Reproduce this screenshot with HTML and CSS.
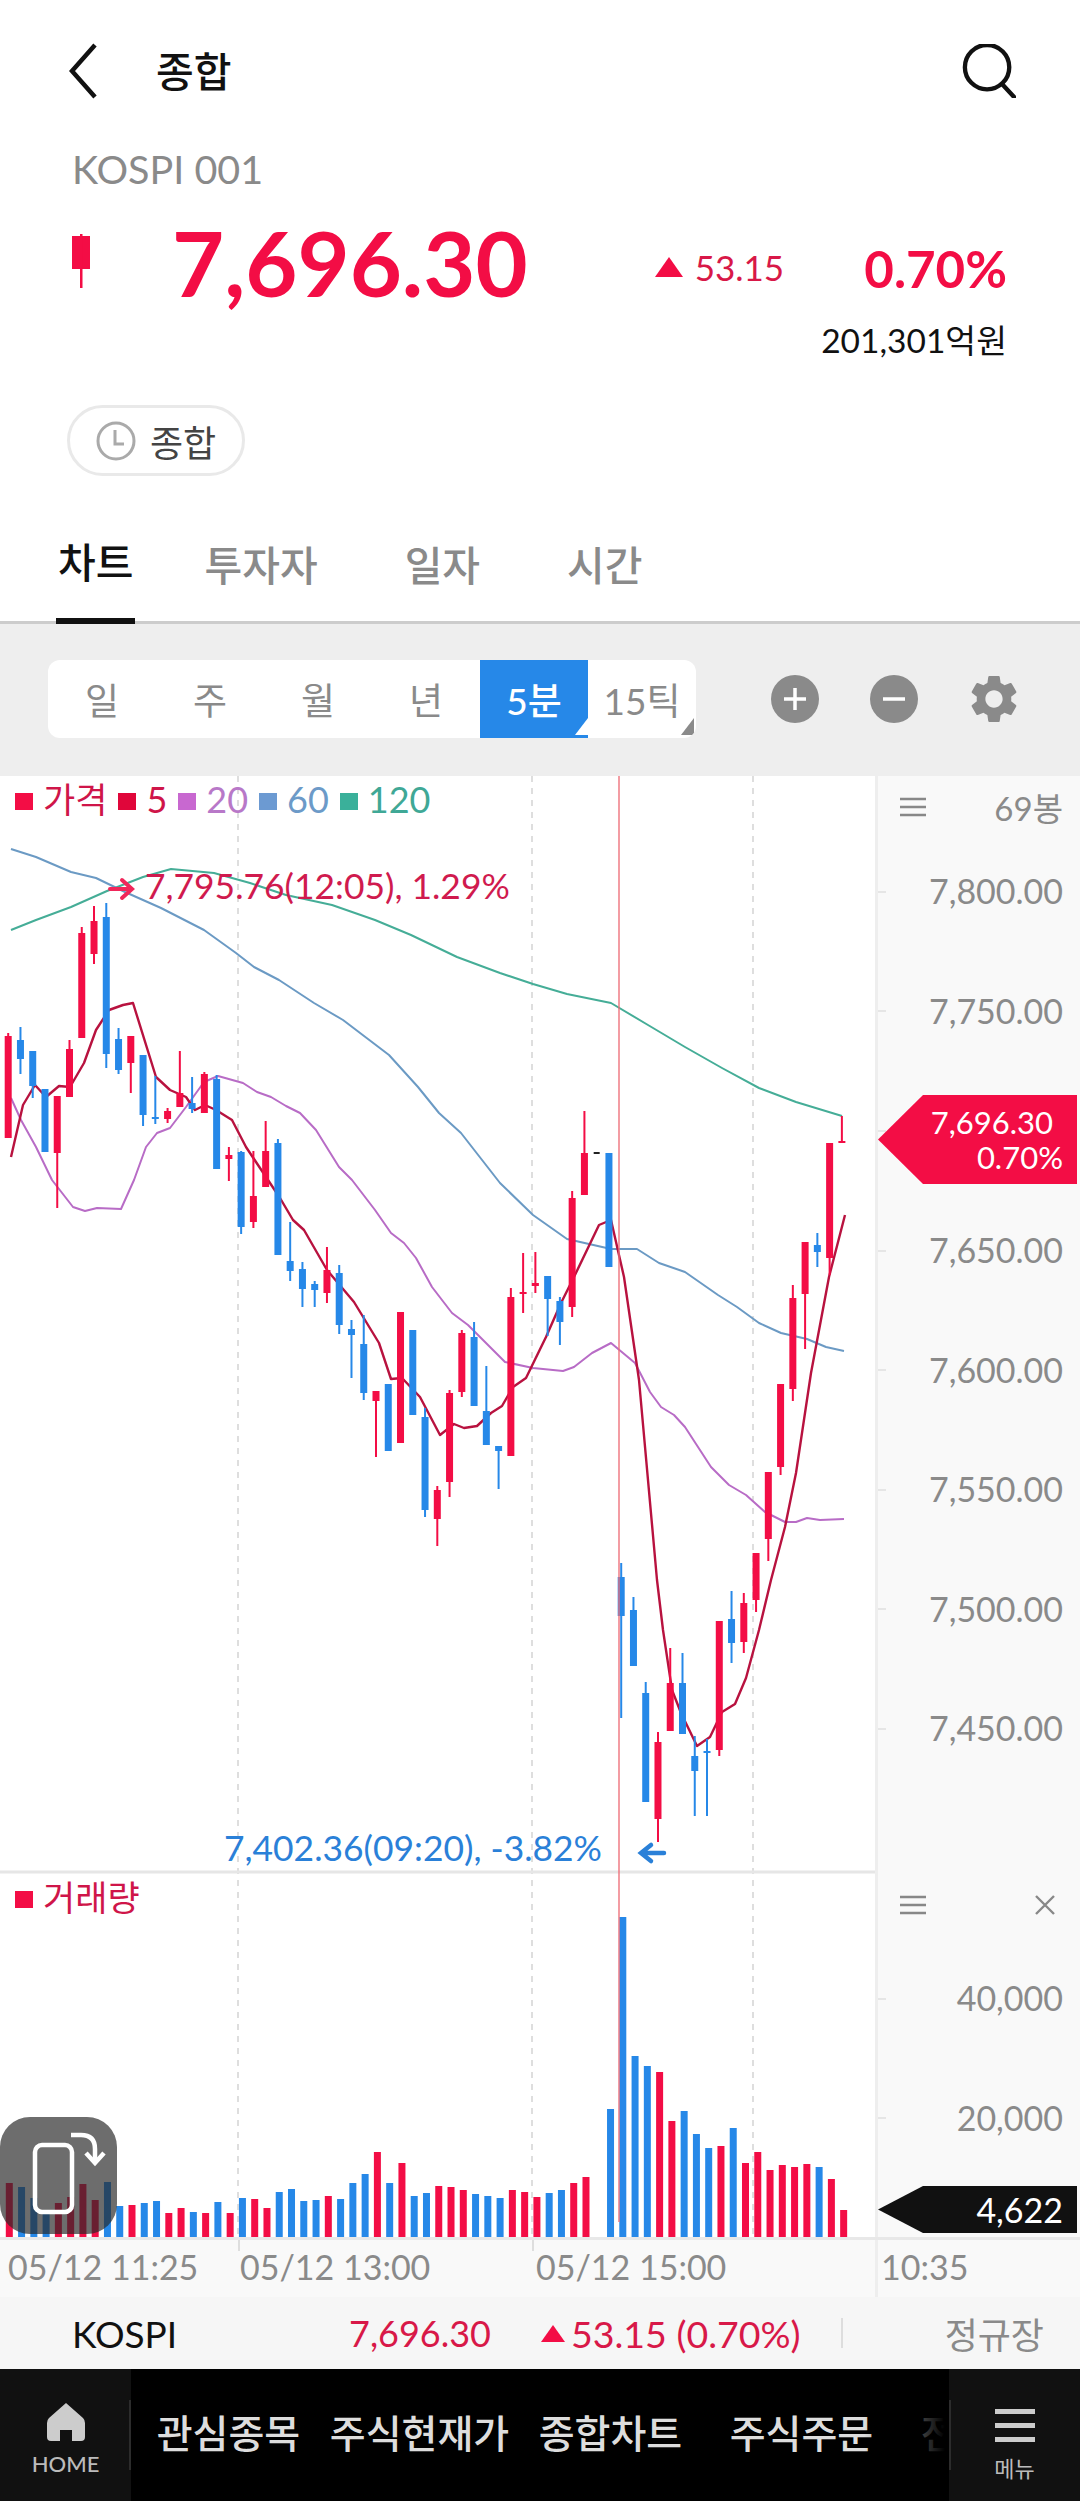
FILE: index.html
```html
<!DOCTYPE html>
<html lang="ko">
<head>
  <meta charset="UTF-8">
  <title>종합 KOSPI 차트</title>
  <link rel="stylesheet" href="styles.css">
</head>
<body>

  <header class="topbar">
    <svg class="icon-back" viewBox="0 0 30 56"><path d="M26 2 L3 28 L26 54"/></svg>
    <h1 class="title">종합</h1>
    <svg class="icon-search" viewBox="0 0 56 56"><circle cx="26" cy="24" r="23"/><path d="M42 42 L54 55"/></svg>
  </header>

  <section class="quote">
    <div class="code">KOSPI 001</div>
    <div class="quote-row">
      <svg class="mini-candle" viewBox="0 0 18 54"><rect x="0" y="2" width="18" height="33"/><rect x="8" y="0" width="2.5" height="54"/></svg>
      <div class="price">7,696.30</div>
      <div class="delta"><i class="tri-up"></i>53.15</div>
      <div class="pct">0.70%</div>
    </div>
    <div class="amount">201,301억원</div>
    <div class="pill">
      <svg class="icon-clock" viewBox="0 0 40 40"><circle cx="20" cy="20" r="18"/><path d="M19 9 V23 H28"/></svg>
      <span>종합</span>
    </div>
  </section>

  <nav class="tabs">
    <a class="tab tab-active">차트</a>
    <a class="tab">투자자</a>
    <a class="tab">일자</a>
    <a class="tab">시간</a>
  </nav>

  <div class="toolbar">
    <div class="periods">
      <span class="period">일</span>
      <span class="period">주</span>
      <span class="period">월</span>
      <span class="period">년</span>
      <span class="period period-on corner">5분</span>
      <span class="period corner">15틱</span>
    </div>
    <svg class="tool tool-plus" viewBox="0 0 48 48"><circle cx="24" cy="24" r="24"/><path d="M24 13 V35 M13 24 H35"/></svg>
    <svg class="tool tool-minus" viewBox="0 0 48 48"><circle cx="24" cy="24" r="24"/><path d="M13 24 H35"/></svg>
    <svg class="tool tool-gear" viewBox="2.4 2 19.2 20"><path d="M19.14 12.94c.04-.3.06-.61.06-.94 0-.32-.02-.64-.07-.94l2.03-1.58a.49.49 0 0 0 .12-.61l-1.92-3.32a.488.488 0 0 0-.59-.22l-2.39.96c-.5-.38-1.03-.7-1.62-.94l-.36-2.54a.484.484 0 0 0-.48-.41h-3.84c-.24 0-.43.17-.47.41l-.36 2.54c-.59.24-1.13.57-1.62.94l-2.39-.96c-.22-.08-.47 0-.59.22L2.74 8.87c-.12.21-.08.47.12.61l2.03 1.58c-.05.3-.09.63-.09.94s.02.64.07.94l-2.03 1.58a.49.49 0 0 0-.12.61l1.92 3.32c.12.22.37.29.59.22l2.39-.96c.5.38 1.03.7 1.62.94l.36 2.54c.05.24.24.41.48.41h3.84c.24 0 .44-.17.47-.41l.36-2.54c.59-.24 1.13-.56 1.62-.94l2.39.96c.22.08.47 0 .59-.22l1.92-3.32c.12-.22.07-.47-.12-.61l-2.01-1.58zM12 15.6c-1.98 0-3.6-1.62-3.6-3.6s1.62-3.6 3.6-3.6 3.6 1.62 3.6 3.6-1.62 3.6-3.6 3.6z"/></svg>
  </div>

  <section class="chart">
    <div class="chart-body">
      <div class="plot">
        <svg id="plot-svg" class="plot-svg" viewBox="0 776 875 1461"></svg>

        <div class="legend legend-price">
          <i class="sq sq-price"></i><span class="c-price legend-ko">가격</span>
          <i class="sq sq-5"></i><span class="c-price">5</span>
          <i class="sq sq-20"></i><span class="c-20">20</span>
          <i class="sq sq-60"></i><span class="c-60">60</span>
          <i class="sq sq-120"></i><span class="c-120">120</span>
        </div>
        <div class="legend legend-volume">
          <i class="sq sq-price"></i><span class="c-price legend-ko">거래량</span>
        </div>

        <div class="note note-high">7,795.76(12:05), 1.29%</div>
        <div class="note note-low">7,402.36(09:20), -3.82%</div>

        <div class="rotate-btn">
          <svg viewBox="0 0 117 117"><rect x="35" y="28" width="37" height="67" rx="7"/><path d="M71 18 H81 Q95 18 95 32 V46"/><path d="M86 36 L95 46 L104 36"/></svg>
        </div>
      </div>

      <aside class="rail">
        <div class="rail-head">
          <svg class="icon-lines" viewBox="0 0 26 20"><path d="M0 2 H26 M0 10 H26 M0 18 H26"/></svg>
          <span>69봉</span>
        </div>
        <div class="axis-row">7,800.00</div>
        <div class="axis-row">7,750.00</div>
        <div class="axis-row"></div>
        <div class="axis-row">7,650.00</div>
        <div class="axis-row">7,600.00</div>
        <div class="axis-row">7,550.00</div>
        <div class="axis-row">7,500.00</div>
        <div class="axis-row">7,450.00</div>
        <div class="rail-gap"></div>
        <div class="rail-head rail-head-vol">
          <svg class="icon-lines" viewBox="0 0 26 20"><path d="M0 2 H26 M0 10 H26 M0 18 H26"/></svg>
          <svg class="icon-close" viewBox="0 0 20 20"><path d="M1 1 L19 19 M19 1 L1 19"/></svg>
        </div>
        <div class="axis-row">40,000</div>
        <div class="axis-row">20,000</div>

        <div class="tag tag-price"><span>7,696.30</span><span>0.70%</span></div>
        <div class="tag tag-volume"><span>4,622</span></div>
      </aside>
    </div>

    <div class="time-axis">
      <div class="time-cell time-a">05/12 11:25</div>
      <div class="time-cell time-b">05/12 13:00</div>
      <div class="time-cell time-c">05/12 15:00</div>
      <div class="time-cell time-d">10:35</div>
    </div>
  </section>

  <div class="strip">
    <span class="strip-name">KOSPI</span>
    <span class="strip-price">7,696.30</span>
    <span class="strip-delta"><i class="tri-up tri-small"></i>53.15 (0.70%)</span>
    <i class="strip-div"></i>
    <span class="strip-state">정규장</span>
  </div>

  <nav class="bottom-nav">
    <div class="nav-side nav-home">
      <svg class="icon-home" viewBox="0 0 38 38"><path d="M19 0 L36 15 Q38 17 38 20 V34 Q38 38 34 38 H25 V27 H13 V38 H4 Q0 38 0 34 V20 Q0 17 2 15 Z"/></svg>
      <span>HOME</span>
    </div>
    <div class="nav-scroll">
      <span class="nav-item">관심종목</span>
      <span class="nav-item">주식현재가</span>
      <span class="nav-item">종합차트</span>
      <span class="nav-item">주식주문</span>
      <span class="nav-item">전체종목</span>
    </div>
    <div class="nav-side nav-menu">
      <i class="menu-bars"></i>
      <span>메뉴</span>
    </div>
  </nav>

  <script src="chart.js"></script>
</body>
</html>
```

FILE: styles.css
```css
* {
  box-sizing: border-box;
}

html, body {
  margin: 0;
  padding: 0;
}

body {
  width: 1080px;
  height: 2501px;
  overflow: hidden;
  background: #fff;
  font-family: Lato, "Noto Sans CJK KR", sans-serif;
  color: #111;
}

/* header */
.topbar {
  height: 142px;
  display: flex;
  align-items: center;
  padding: 0 64px 0 69px;
}

.icon-back {
  width: 30px;
  height: 56px;
  fill: none;
  stroke: #111;
  stroke-width: 4.5;
}

.title {
  margin: 0 0 4px 57px;
  font-size: 41px;
  font-weight: 500;
  flex: 1;
}

.icon-search {
  width: 54px;
  height: 54px;
  fill: none;
  stroke: #111;
  stroke-width: 4.5;
  stroke-linecap: round;
}

/* quote block */
.quote {
  height: 335px;
  padding: 7px 73px 0 72px;
}

.code {
  font-size: 39.5px;
  line-height: 40px;
  color: #8a8a8a;
}

.quote-row {
  height: 80px;
  margin-top: 33px;
  display: flex;
  align-items: center;
}

.mini-candle {
  width: 18px;
  height: 54px;
  fill: #f30d45;
  margin-top: -2px;
}

.price {
  margin-left: 82px;
  font-size: 90px;
  font-weight: 700;
  line-height: 80px;
  color: #f30d45;
}

.delta {
  margin: 10px 0 0 127px;
  font-size: 35px;
  color: #d81848;
  display: flex;
  align-items: center;
}

.tri-up {
  width: 0;
  height: 0;
  margin-right: 12px;
  border-left: 14px solid transparent;
  border-right: 14px solid transparent;
  border-bottom: 20px solid #f30d45;
}

.pct {
  margin: 12px 0 0 auto;
  font-size: 51px;
  font-weight: 700;
  color: #f30d45;
}

.amount {
  margin-top: 18px;
  text-align: right;
  font-size: 33.5px;
  line-height: 40px;
}

.pill {
  width: 178px;
  height: 71px;
  margin: 45px 0 0 -5px;
  border: 3px solid #e9e9e9;
  border-radius: 36px;
  display: flex;
  align-items: center;
  padding-left: 26px;
  font-size: 36px;
  color: #444;
}

.icon-clock {
  width: 40px;
  height: 40px;
  margin-right: 14px;
  fill: none;
  stroke: #aaa;
  stroke-width: 3;
}

/* tabs */
.tabs {
  height: 147px;
  display: flex;
  gap: 83px;
  padding-left: 56px;
  border-bottom: 3px solid #ccc;
}

.tab {
  height: 147px;
  padding: 25px 2px 0;
  display: flex;
  align-items: center;
  font-size: 41px;
  font-weight: 500;
  color: #8a8a8a;
}

.tab-active {
  margin-right: -16px;
  color: #111;
  border-bottom: 6px solid #111;
}

/* period toolbar */
.toolbar {
  height: 152px;
  padding: 0 0 2px 48px;
  display: flex;
  align-items: center;
  background: #eee;
}

.periods {
  width: 648px;
  height: 78px;
  display: flex;
  background: #fff;
  border-radius: 12px;
  overflow: hidden;
}

.period {
  position: relative;
  flex: 1;
  display: flex;
  align-items: center;
  justify-content: center;
  font-size: 37px;
  color: #8a8a8a;
}

.period-on {
  background: #2688e8;
  color: #fff;
  font-weight: 500;
}

.corner::after {
  content: "";
  position: absolute;
  right: 2px;
  bottom: 3px;
  border-left: 13px solid transparent;
  border-bottom: 17px solid #8a8a8a;
}

.period-on.corner::after {
  border-bottom-color: #fff;
  right: 0;
}

.tool {
  width: 48px;
  height: 48px;
  fill: #8a8a8a;
  stroke: none;
}

.tool path {
  stroke: #fff;
  stroke-width: 3.5;
}

.tool-plus {
  margin-left: 75px;
}

.tool-minus {
  margin-left: 51px;
}

.tool-gear {
  margin-left: 52px;
}

.tool-gear path {
  stroke: none;
}

/* chart */
.chart {
  height: 1521px;
  display: flex;
  flex-direction: column;
}

.chart-body {
  height: 1461px;
  display: flex;
}

.plot {
  position: relative;
  width: 875px;
  height: 1461px;
  overflow: hidden;
}

.plot-svg {
  display: block;
  width: 875px;
  height: 1461px;
}

.up {
  fill: #f30d45;
  stroke: #f30d45;
}

.down {
  fill: #2688e8;
  stroke: #2688e8;
}

.doji {
  fill: #222;
  stroke: #222;
}

.wick {
  stroke-width: 2;
  fill: none;
}

.ma {
  fill: none;
  stroke-width: 2;
  stroke-linejoin: round;
}

.ma-5 {
  stroke: #b8123f;
  stroke-width: 2.4;
}

.ma-20 {
  stroke: #b86cc6;
}

.ma-60 {
  stroke: #6b9ac4;
}

.ma-120 {
  stroke: #45ad97;
}

.grid-line {
  stroke: #dedede;
  stroke-width: 2;
  stroke-dasharray: 6 6;
}

.cross-line {
  stroke: #ee6f78;
  stroke-width: 1.6;
  opacity: 0.85;
}

.pane-line {
  stroke: #e6e6e6;
  stroke-width: 3;
}

.note-arrow {
  fill: none;
  stroke-width: 4;
  stroke-linecap: round;
}

.arrow-high {
  stroke: #f0265a;
}

.arrow-low {
  stroke: #2a80d8;
  stroke-width: 4.5;
}

.legend {
  position: absolute;
  left: 15px;
  display: flex;
  align-items: center;
  height: 36px;
  font-size: 36px;
  line-height: 36px;
}

.legend-price {
  top: 5px;
}

.legend-volume {
  top: 1103px;
}

.legend span {
  margin: 0 11px 0 10px;
}

.legend .legend-ko {
  font-size: 35px;
}

.sq {
  width: 18px;
  height: 17px;
  margin-top: 4px;
}

.sq-price {
  background: #f30d45;
}

.sq-5 {
  background: #e0063a;
}

.sq-20 {
  background: #c868d0;
}

.sq-60 {
  background: #6c9ad2;
}

.sq-120 {
  background: #3ab09a;
}

.c-price {
  color: #cf1549;
}

.c-20 {
  color: #b878c8;
}

.c-60 {
  color: #6c9ac8;
}

.c-120 {
  color: #3fa896;
}

.note {
  position: absolute;
  font-size: 35.4px;
  line-height: 40px;
  white-space: nowrap;
}

.note-high {
  left: 145px;
  top: 90px;
  color: #d01a4e;
}

.note-low {
  left: 224px;
  top: 1052px;
  color: #2a80d8;
}

.rotate-btn {
  position: absolute;
  left: 0;
  top: 1341px;
  width: 117px;
  height: 117px;
  border-radius: 30px;
  background: rgba(40, 40, 40, 0.68);
}

.rotate-btn svg {
  display: block;
  fill: none;
  stroke: #fff;
  stroke-width: 4.5;
}

/* right rail */
.rail {
  position: relative;
  width: 205px;
  display: flex;
  flex-direction: column;
  background: #f9f9f9;
  border-left: 3px solid #eee;
  color: #8a8a8a;
}

.rail-head {
  flex: none;
  height: 55px;
  padding: 6px 17px 0 22px;
  display: flex;
  align-items: center;
  justify-content: space-between;
  font-size: 33px;
}

.rail-head-vol {
  height: 66px;
  padding-top: 0;
  padding-right: 25px;
}

.icon-lines {
  width: 26px;
  height: 20px;
  fill: none;
  stroke: #888;
  stroke-width: 2.4;
}

.icon-close {
  width: 20px;
  height: 20px;
  fill: none;
  stroke: #888;
  stroke-width: 2.4;
}

.axis-row {
  position: relative;
  flex: none;
  height: 119.6px;
  padding-right: 17px;
  display: flex;
  align-items: center;
  justify-content: flex-end;
  font-size: 34px;
}

.axis-row::before {
  content: "";
  position: absolute;
  left: 0;
  top: 50%;
  width: 8px;
  height: 2px;
  background: #e6e6e6;
}

.rail-gap {
  flex: none;
  height: 84px;
}

.tag {
  position: absolute;
  left: 0;
  width: 199px;
  padding-right: 14px;
  display: flex;
  flex-direction: column;
  justify-content: center;
  align-items: flex-end;
  clip-path: polygon(0 50%, 45px 0, 100% 0, 100% 100%, 45px 100%);
  color: #fff;
}

.tag-price {
  top: 319px;
  height: 89px;
  background: #f30d45;
  font-size: 31px;
  line-height: 35px;
}

.tag-price span:first-child {
  margin-right: 10px;
}

.tag-volume {
  top: 1410px;
  height: 47px;
  background: #111;
  font-size: 34px;
}

/* time axis */
.time-axis {
  height: 60px;
  display: flex;
  background: #f9f9f9;
  border-top: 3px solid #e8e8e8;
  font-size: 34px;
  color: #8a8a8a;
}

.time-cell {
  position: relative;
  display: flex;
  align-items: center;
  padding-bottom: 4px;
  white-space: nowrap;
}

.time-cell::before {
  content: "";
  position: absolute;
  left: 0;
  top: 0;
  width: 2px;
  height: 11px;
  background: #dedede;
}

.time-a {
  width: 238px;
  padding-left: 8px;
}

.time-a::before {
  display: none;
}

.time-b {
  width: 294px;
  padding-left: 2px;
}

.time-c {
  width: 343px;
  padding-left: 4px;
}

.time-d {
  width: 205px;
  padding-left: 3px;
  border-left: 3px solid #eee;
}

.time-d::before {
  display: none;
}

/* stock strip */
.strip {
  height: 72px;
  padding: 0 36px 0 72px;
  display: flex;
  align-items: center;
  background: #f6f6f6;
  font-size: 36px;
}

.strip-name {
  width: 277px;
  font-size: 37px;
}

.strip-price {
  width: 192px;
  color: #d81848;
}

.strip-delta {
  width: 300px;
  display: flex;
  align-items: center;
  font-size: 37.5px;
  color: #d81848;
}

.tri-small {
  margin-right: 6px;
  border-left-width: 12px;
  border-right-width: 12px;
  border-bottom-width: 17px;
}

.strip-div {
  width: 2px;
  height: 30px;
  background: #ddd;
}

.strip-state {
  margin-left: auto;
  font-size: 36px;
  color: #8a8a8a;
}

/* bottom nav */
.bottom-nav {
  height: 132px;
  display: flex;
  background: #000;
  color: #ddd;
}

.nav-side {
  position: relative;
  width: 131px;
  display: flex;
  flex-direction: column;
  align-items: center;
  background: #111;
  color: #bbb;
}

.nav-side::after {
  content: "";
  position: absolute;
  top: 31px;
  width: 2px;
  height: 70px;
  background: #2c2c2c;
}

.nav-home::after {
  right: 0;
}

.nav-menu::after {
  left: 0;
}

.nav-home {
  padding-top: 34px;
  font-size: 22px;
  font-weight: 500;
}

.icon-home {
  width: 38px;
  height: 38px;
  margin-bottom: 9px;
  fill: #ccc;
}

.nav-menu {
  padding-top: 40px;
  font-size: 22px;
}

.menu-bars {
  width: 40px;
  height: 33px;
  margin-bottom: 9px;
  border-top: 5px solid #ccc;
  border-bottom: 5px solid #ccc;
  position: relative;
}

.menu-bars::after {
  content: "";
  position: absolute;
  left: 0;
  right: 0;
  top: 9px;
  height: 5px;
  background: #ccc;
}

.nav-scroll {
  position: relative;
  width: 818px;
  display: flex;
  overflow: hidden;
  align-items: flex-start;
  padding: 40px 0 0 2px;
}

.nav-scroll::after {
  content: "";
  position: absolute;
  top: 0;
  bottom: 0;
  right: 0;
  width: 85px;
  background: linear-gradient(to right, rgba(0, 0, 0, 0), #000 95%);
}

.nav-item {
  flex: 0 0 191px;
  text-align: center;
  font-size: 39px;
  line-height: 48px;
  font-weight: 500;
  white-space: nowrap;
}
```

FILE: chart.js
```js
// candles: [type, high, bodyTop, bodyBottom, low] in page pixels
// type: u = up (red), d = down (blue), n = doji
const candles = [
  ['u',1033,1036,1138,1138], ['d',1027,1040,1059,1074], ['d',1051,1051,1086,1098], ['d',1089,1089,1152,1152],
  ['u',1096,1096,1153,1208], ['u',1040,1049,1097,1097], ['u',927,933,1038,1038], ['u',906,921,954,964],
  ['d',903,917,1054,1068], ['d',1028,1039,1070,1074], ['u',1036,1036,1063,1093], ['d',1055,1055,1115,1126],
  ['d',1076,1117,1119,1124], ['u',1108,1111,1119,1123], ['u',1051,1093,1107,1107], ['d',1077,1103,1109,1113],
  ['u',1072,1074,1113,1113], ['d',1075,1079,1169,1169], ['u',1147,1155,1159,1181], ['d',1151,1152,1227,1234],
  ['u',1151,1196,1222,1228], ['u',1121,1151,1187,1187], ['d',1139,1143,1255,1255], ['d',1222,1261,1271,1281],
  ['d',1262,1269,1289,1307], ['d',1281,1284,1290,1307], ['u',1247,1270,1293,1303], ['d',1265,1273,1325,1334],
  ['d',1320,1329,1335,1378], ['d',1315,1344,1393,1400], ['u',1391,1391,1401,1457], ['d',1384,1384,1451,1451],
  ['u',1312,1312,1443,1443], ['d',1330,1330,1415,1415], ['d',1408,1417,1510,1517], ['u',1486,1490,1519,1546],
  ['u',1390,1393,1482,1497], ['u',1330,1333,1392,1397], ['d',1322,1337,1406,1406], ['d',1366,1411,1445,1445],
  ['d',1446,1446,1451,1489], ['u',1288,1297,1456,1456], ['u',1253,1292,1294,1313], ['u',1252,1283,1286,1293],
  ['d',1276,1276,1299,1336], ['d',1297,1301,1322,1345], ['u',1191,1198,1307,1317], ['u',1111,1153,1195,1195],
  ['n',1153,1152,1154,1154], ['d',1153,1153,1267,1267], ['d',1563,1577,1616,1718], ['d',1597,1610,1666,1666],
  ['d',1682,1693,1802,1802], ['u',1732,1742,1819,1842], ['u',1648,1683,1731,1731], ['d',1653,1683,1734,1734],
  ['d',1736,1756,1771,1816], ['d',1739,1751,1752,1816], ['u',1621,1621,1750,1756], ['d',1591,1619,1643,1663],
  ['u',1593,1603,1642,1653], ['u',1553,1553,1600,1612], ['u',1472,1472,1539,1561], ['u',1384,1384,1467,1475],
  ['u',1285,1298,1389,1401], ['u',1242,1242,1294,1349], ['d',1233,1245,1252,1267], ['u',1143,1143,1258,1275],
  ['u',1116,1141,1142,1142]
];

// top of each volume bar, page pixels (null = no bar)
const volumes = [
  2183,2187,2198,2212,2203,2197,2184,2200,2182,2206,2205,2203,2201,2213,2208,2212,2213,2202,2213,2198,
  2199,2208,2192,2189,2201,2200,2196,2199,2183,2174,2152,2183,2163,2196,2193,2186,2187,2190,2194,2196,
  2198,2190,2192,2197,2193,2190,2183,2177,null,2109,1917,2056,2066,2072,2121,2111,2134,2148,2146,2128,
  2163,2152,2170,2165,2167,2164,2167,2179,2210
];

const maLines = {
  'ma-120': '11,930 36,920 71,907 107,891 143,877 171,869 214,873 250,883 286,895 332,905 375,920 411,935 457,957 500,973 533,984 567,994 611,1003 648,1025 685,1047 722,1068 759,1088 796,1102 842,1116',
  'ma-60': '11,849 36,857 71,872 96,878 125,892 161,908 204,930 236,953 254,967 279,980 314,1003 343,1020 389,1055 418,1087 439,1113 461,1133 500,1183 533,1215 567,1239 611,1249 637,1249 659,1263 685,1272 718,1295 737,1307 759,1323 781,1333 807,1339 826,1347 844,1351',
  'ma-20': '11,1098 21,1120 36,1147 52,1180 73,1207 85,1211 97,1208 121,1209 134,1180 146,1147 157,1133 170,1128 186,1107 204,1082 218,1076 243,1083 257,1092 271,1097 286,1106 300,1113 316,1130 339,1167 352,1180 375,1210 391,1233 404,1243 416,1258 432,1287 452,1313 468,1325 505,1362 533,1368 563,1371 574,1367 592,1353 611,1343 635,1363 650,1392 661,1407 674,1415 685,1427 711,1467 729,1485 746,1495 765,1512 785,1522 796,1522 807,1518 820,1520 844,1519',
  'ma-5': '11,1157 23,1105 35,1085 46,1097 59,1086 70,1087 84,1063 96,1030 109,1010 123,1005 133,1003 156,1077 170,1090 186,1097 195,1110 205,1105 216,1110 232,1120 246,1147 268,1180 280,1198 293,1220 304,1230 327,1270 354,1302 379,1343 391,1379 402,1378 420,1397 440,1435 454,1424 464,1428 477,1426 491,1413 502,1406 513,1387 526,1378 546,1337 561,1303 574,1277 599,1225 611,1220 624,1277 639,1380 657,1580 663,1630 672,1690 681,1713 697,1746 710,1737 722,1712 735,1704 746,1678 759,1630 771,1580 785,1527 796,1473 811,1373 829,1277 845,1215'
};

const svg = document.getElementById('plot-svg');

function add(tag, attrs) {
  const el = document.createElementNS('http://www.w3.org/2000/svg', tag);
  for (const key in attrs) el.setAttribute(key, attrs[key]);
  svg.appendChild(el);
  return el;
}

// grid
[238, 532, 753].forEach(x => {
  add('line', { x1: x, x2: x, y1: 776, y2: 2237, class: 'grid-line' });
});
add('line', { x1: 0, x2: 875, y1: 1872, y2: 1872, class: 'pane-line' });

// moving averages sit behind the candles
['ma-120', 'ma-60', 'ma-20', 'ma-5'].forEach(name => {
  add('polyline', { points: maLines[name], class: 'ma ' + name });
});

const typeClass = { u: 'up', d: 'down', n: 'doji' };

candles.forEach((c, i) => {
  const x = 8.2 + 12.26 * i;
  const cls = typeClass[c[0]];
  const bodyW = c[0] === 'n' ? 6 : 7;
  add('line', { x1: x, x2: x, y1: c[1], y2: c[4], class: 'wick ' + cls });
  add('rect', { x: x - bodyW / 2, y: c[2], width: bodyW, height: Math.max(c[3] - c[2], 2), class: cls, 'stroke-width': 0 });

  if (volumes[i] !== null) {
    const vx = 9.3 + 12.27 * i;
    add('rect', { x: vx - 3.5, y: volumes[i], width: 7, height: 2237 - volumes[i], class: cls, 'stroke-width': 0 });
  }
});

add('line', { x1: 619, x2: 619, y1: 776, y2: 2222, class: 'cross-line' });

// high / low markers
add('path', { d: 'M110 889 H131 M122 880 L132 889 L122 898', class: 'note-arrow arrow-high' });
add('path', { d: 'M664 1853 H642 M651 1845 L641 1853 L651 1861', class: 'note-arrow arrow-low' });
```
